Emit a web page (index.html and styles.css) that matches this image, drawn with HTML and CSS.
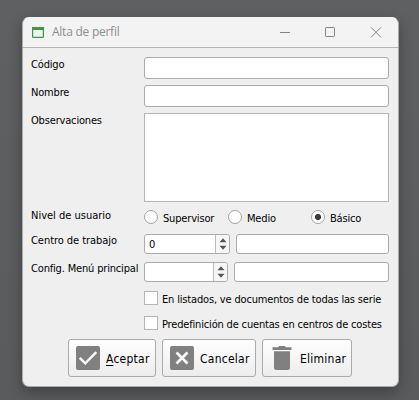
FILE: index.html
```html
<!DOCTYPE html>
<html lang="es">
<head>
<meta charset="utf-8">
<title>Alta de perfil</title>
<link rel="stylesheet" href="styles.css">
</head>
<body>
<main class="window">
  <header class="titlebar">
    <svg class="app-icon" width="12" height="11" viewBox="0 0 12 11"><rect x=".6" y=".6" width="10.8" height="9.8" rx=".6" fill="#edf6ed" stroke="#3f9647" stroke-width="1.2"/><path d="M0 0h12v3H0z" fill="#3f9647"/></svg>
    <h1 class="title">Alta de perfil</h1>
    <svg class="controls" width="102" height="11" viewBox="0 0 102 11" fill="none" stroke="#858585"><path d="M0 5.5h10"/><rect x="45.5" y=".5" width="9" height="9" rx=".7"/><path d="M91 .3l10 10M101 .3l-10 10"/></svg>
  </header>
  <form class="form">
    <div class="row line"><span class="label">Código</span><span class="field"></span></div>
    <div class="row line"><span class="label">Nombre</span><span class="field"></span></div>
    <div class="row area"><span class="label">Observaciones</span><span class="field square"></span></div>
    <div class="row radios"><span class="label l-nivel">Nivel de usuario</span>
      <span class="option supervisor"><i class="radio"></i><span class="text">Supervisor</span></span>
      <span class="option medio"><i class="radio"></i><span class="text">Medio</span></span>
      <span class="option basico"><i class="radio checked"></i><span class="text">Básico</span></span>
    </div>
    <div class="row spins"><span class="label l-centro">Centro de trabajo</span>
      <span class="spin wide"><span class="value">0</span><span class="arrows"><svg width="8" height="12" viewBox="0 0 8 12"><path d="M.5 4.3L4 .3l3.500 4zM.5 7.7h7l-3.500 4z" fill="#555"/></svg></span></span><span class="field"></span>
    </div>
    <div class="row spins"><span class="label">Config. Menú principal</span>
      <span class="spin"><span class="value"></span><span class="arrows"><svg width="8" height="12" viewBox="0 0 8 12"><path d="M.5 4.3L4 .3l3.500 4zM.5 7.7h7l-3.500 4z" fill="#555"/></svg></span></span><span class="field"></span>
    </div>
    <div class="check"><i class="box"></i><span class="text">En listados, ve documentos de todas las serie</span></div>
    <div class="check"><i class="box"></i><span class="text">Predefinición de cuentas en centros de costes</span></div>
  </form>
  <footer class="actions">
    <button class="button aceptar"><svg width="24" height="24" viewBox="0 0 24 24"><rect width="24" height="24" rx="2" fill="#808080"/><path d="M3.700 11.800L9.300 17.300 20.300 6.200" fill="none" stroke="#fafafa" stroke-width="2.500"/></svg><span class="caption"><u>A</u>ceptar</span></button>
    <button class="button cancelar"><svg width="24" height="24" viewBox="0 0 24 24"><rect width="24" height="24" rx="2" fill="#808080"/><path d="M6.500 6.500l11 11M17.500 6.500l-11 11" fill="none" stroke="#fafafa" stroke-width="2.700"/></svg><span class="caption">Cancelar</span></button>
    <button class="button eliminar"><svg width="24" height="24" viewBox="0 0 24 24"><path d="M2.500 1.300H8L9.300 0h5.400L16 1.300h5.500V4h-19zM4 5.300h16V21.500a2.500 2.500 0 0 1-2.500 2.500h-11A2.500 2.500 0 0 1 4 21.500z" fill="#808080"/></svg><span class="caption">Eliminar</span></button>
  </footer>
</main>
</body>
</html>
```
FILE: styles.css
```css
* { box-sizing: border-box; }
body {
  margin: 0;
  width: 419px;
  height: 400px;
  padding: 17px 20px 13px 22px;
  overflow: hidden;
  background: linear-gradient(#5f6062, #5a5b5d);
  font: 11px/14px "DejaVu Sans Condensed", "DejaVu Sans", sans-serif;
  font-stretch: condensed;
  letter-spacing: -.17px;
  color: #000;
}
svg { display: block; flex: none; }
.window {
  width: 377px;
  height: 370px;
  border: 1px solid #aaa;
  border-top-color: #f3f3f3;
  border-radius: 7px;
  background: #efefef;
  box-shadow: 0 5px 14px rgba(0, 0, 0, .3);
  overflow: hidden;
}
.titlebar {
  display: flex;
  align-items: center;
  height: 30px;
  padding: 0 16px 1px 9px;
  border-bottom: 1px solid #b4b4b4;
  background: #f3f3f3;
}
.title {
  flex: 1;
  margin: 0 0 0 8px;
  font: 12px/16px "Open Sans", "Noto Sans", sans-serif;
  letter-spacing: -.25px;
  color: #8e8e8e;
}
.form { padding: 9px 9px 0 8px; }
.row { display: flex; }
.label { flex: none; width: 113px; padding-top: 1px; white-space: nowrap; }
.text, .caption { white-space: nowrap; }
.line { height: 22px; margin-bottom: 6px; }
.area { height: 89px; margin-bottom: 8px; }
.field {
  flex: 1;
  border: 1px solid #ababab;
  border-radius: 3px;
  background: #fff;
}
.square { border-color: #b5b5b5; border-radius: 0; }
.radios { height: 14px; margin-bottom: 10px; }
.radios .label { margin-top: -2px; }
.l-nivel { letter-spacing: 0; }
.l-centro { letter-spacing: -.05px; }
.option { display: flex; gap: 5px; }
.option .text { padding-top: 2px; }
.supervisor { width: 84px; }
.medio { width: 83px; }
.radio {
  flex: none;
  width: 14px;
  height: 14px;
  border: 1px solid #a3a3a3;
  border-radius: 50%;
  background: #fff;
}
.checked { background: radial-gradient(circle, #3b3b3b 2.7px, #fff 3.4px); }
.spins { height: 20px; margin-bottom: 8px; }
.spins .label { padding-top: 0; }
.spin {
  display: flex;
  width: 84px;
  margin-right: 6px;
  border: 1px solid #ababab;
  border-radius: 3px;
  background: #fff;
}
.wide { width: 86px; }
.value { flex: 1; padding: 3px 0 0 4px; }
.arrows {
  display: flex;
  align-items: center;
  justify-content: center;
  width: 14px;
  border-left: 1px solid #bcbcbc;
  border-radius: 0 3px 3px 0;
  background: #f6f6f6;
}
.check { display: flex; gap: 4px; height: 14px; margin: 0 0 11px 113px; }
.spins + .check { margin-top: 9px; }
.box { flex: none; width: 14px; height: 14px; border: 1px solid #b5b5b5; background: #fff; }
.check .text { padding-top: 2px; }
.actions { display: flex; gap: 6px; margin: -2px 0 0 45px; }
.button {
  display: flex;
  align-items: center;
  gap: 6px;
  height: 38px;
  padding: 0 0 0 7px;
  border: 1px solid #aaa;
  border-radius: 3px;
  background: linear-gradient(#fefefe, #ededed);
  font: 12px/16px "DejaVu Sans Condensed", "DejaVu Sans", sans-serif;
  letter-spacing: .25px;
  color: #000;
}
.caption { padding-top: 1px; }
.aceptar { width: 88px; }
.cancelar { width: 94px; }
.eliminar { width: 90px; }
.caption u { text-underline-offset: 2px; }
```
